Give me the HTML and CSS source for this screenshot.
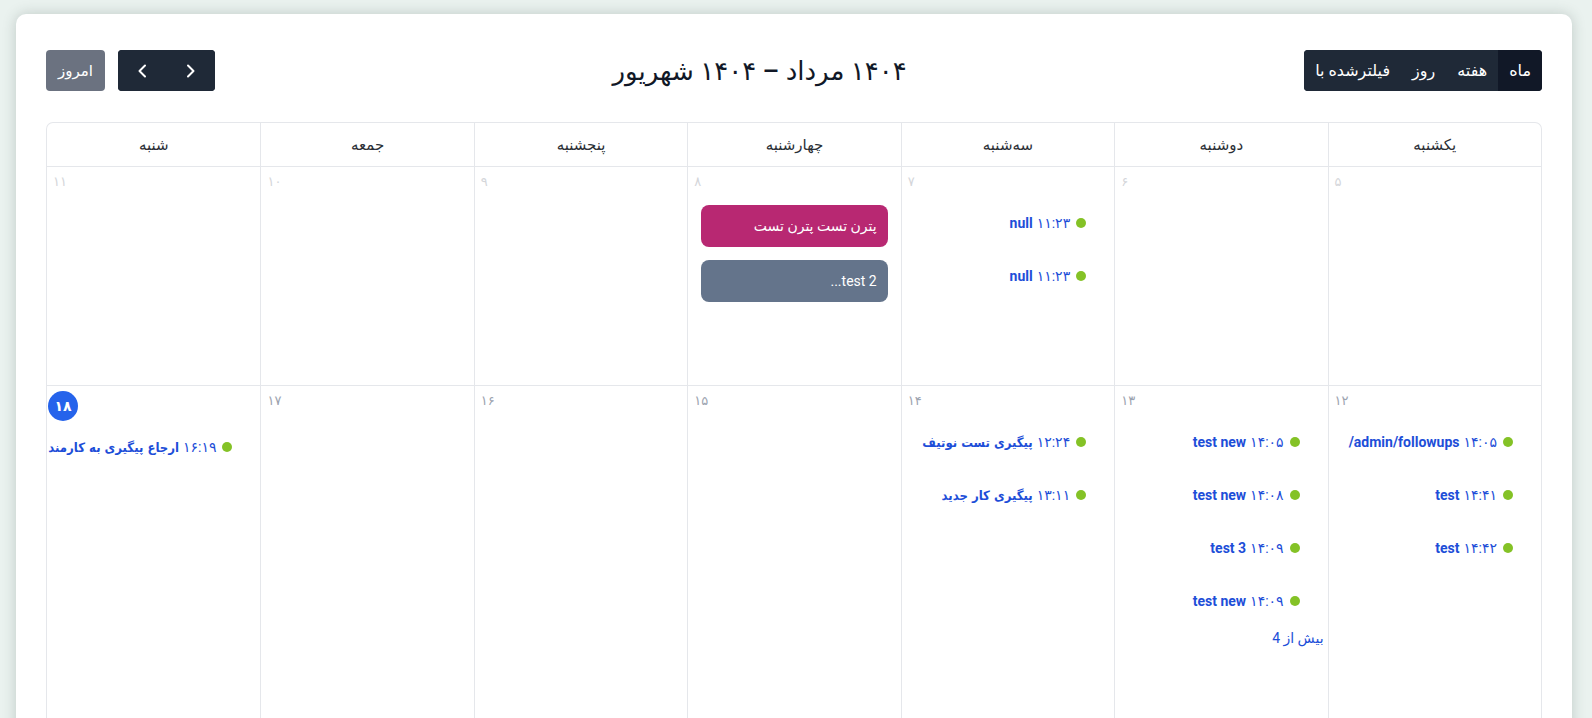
FILE: index.html
```html
<!DOCTYPE html>
<html lang="fa" dir="rtl">
<head>
<meta charset="utf-8">
<title>تقویم</title>
<link rel="stylesheet" href="styles.css">
</head>
<body>
<div class="page">
  <div class="card">
    <div class="toolbar">
      <div class="views">
        <button class="vbtn active">ماه</button>
        <button class="vbtn">هفته</button>
        <button class="vbtn">روز</button>
        <button class="vbtn">فیلترشده با</button>
      </div>
      <h2 class="title">۱۴۰۴ مرداد – ۱۴۰۴ شهریور</h2>
      <div class="nav">
        <div class="navgroup">
          <button class="nbtn" aria-label="قبلی"><svg width="10" height="14" viewBox="0 0 10 14"><polyline points="2,1.5 7.5,7 2,12.5" fill="none" stroke="#fff" stroke-width="2" stroke-linecap="round" stroke-linejoin="round"/></svg></button>
          <button class="nbtn" aria-label="بعدی"><svg width="10" height="14" viewBox="0 0 10 14"><polyline points="8,1.5 2.5,7 8,12.5" fill="none" stroke="#fff" stroke-width="2" stroke-linecap="round" stroke-linejoin="round"/></svg></button>
        </div>
        <button class="today">امروز</button>
      </div>
    </div>

    <div class="grid">
      <div class="hd">یکشنبه</div>
      <div class="hd">دوشنبه</div>
      <div class="hd">سه&zwnj;شنبه</div>
      <div class="hd">چهارشنبه</div>
      <div class="hd">پنجشنبه</div>
      <div class="hd">جمعه</div>
      <div class="hd">شنبه</div>

      <!-- row 1 -->
      <div class="cell r1"><div class="num-area"><span class="num faded">۵</span></div></div>
      <div class="cell r1"><div class="num-area"><span class="num faded">۶</span></div></div>
      <div class="cell r1"><div class="num-area"><span class="num faded">۷</span></div>
        <div class="ev"><span class="dot"></span><span class="time">۱۱:۲۳</span><span class="etitle">null</span></div>
        <div class="ev"><span class="dot"></span><span class="time">۱۱:۲۳</span><span class="etitle">null</span></div>
      </div>
      <div class="cell r1"><div class="num-area"><span class="num faded">۸</span></div>
        <div class="block magenta">پترن تست پترن تست</div>
        <div class="block slate">test 2...</div>
      </div>
      <div class="cell r1"><div class="num-area"><span class="num faded">۹</span></div></div>
      <div class="cell r1"><div class="num-area"><span class="num faded">۱۰</span></div></div>
      <div class="cell r1"><div class="num-area"><span class="num faded">۱۱</span></div></div>

      <!-- row 2 -->
      <div class="cell r2"><div class="num-area"><span class="num">۱۲</span></div>
        <div class="ev"><span class="dot"></span><span class="time">۱۴:۰۵</span><span class="etitle">admin/followups/</span></div>
        <div class="ev"><span class="dot"></span><span class="time">۱۴:۴۱</span><span class="etitle">test</span></div>
        <div class="ev"><span class="dot"></span><span class="time">۱۴:۴۲</span><span class="etitle">test</span></div>
      </div>
      <div class="cell r2"><div class="num-area"><span class="num">۱۳</span></div>
        <div class="ev"><span class="dot"></span><span class="time">۱۴:۰۵</span><span class="etitle">test new</span></div>
        <div class="ev"><span class="dot"></span><span class="time">۱۴:۰۸</span><span class="etitle">test new</span></div>
        <div class="ev"><span class="dot"></span><span class="time">۱۴:۰۹</span><span class="etitle">test 3</span></div>
        <div class="ev"><span class="dot"></span><span class="time">۱۴:۰۹</span><span class="etitle">test new</span></div>
        <a class="more">بیش از 4</a>
      </div>
      <div class="cell r2"><div class="num-area"><span class="num">۱۴</span></div>
        <div class="ev"><span class="dot"></span><span class="time">۱۲:۲۴</span><span class="etitle fa">پیگیری تست نوتیف</span></div>
        <div class="ev"><span class="dot"></span><span class="time">۱۳:۱۱</span><span class="etitle fa">پیگیری کار جدید</span></div>
      </div>
      <div class="cell r2"><div class="num-area"><span class="num">۱۵</span></div></div>
      <div class="cell r2"><div class="num-area"><span class="num">۱۶</span></div></div>
      <div class="cell r2"><div class="num-area"><span class="num">۱۷</span></div></div>
      <div class="cell r2"><div class="num-area"><span class="num today-num">۱۸</span></div>
        <div class="ev"><span class="dot"></span><span class="time">۱۶:۱۹</span><span class="etitle fa">ارجاع پیگیری به کارمند</span></div>
      </div>
    </div>
  </div>
</div>
</body>
</html>
```

FILE: styles.css
```css
* { box-sizing: border-box; }

html, body {
  margin: 0;
  padding: 0;
  height: 100%;
  overflow: hidden;
}

body {
  background: #eaf2ef;
  font-family: Roboto, "DejaVu Sans", sans-serif;
  color: #1f2937;
}

.page {
  padding: 14px 20px 0 16px;
}

.card {
  background: #fff;
  border-radius: 10px;
  box-shadow: 0 0 14px rgba(40, 60, 55, 0.22);
  padding: 36px 30px 0 30px;
  min-height: 800px;
}

.toolbar {
  display: flex;
  justify-content: space-between;
  align-items: center;
  height: 41px;
  margin-bottom: 31px;
}

button {
  font-family: inherit;
  border: 0;
  cursor: pointer;
}

.views {
  display: flex;
  height: 41px;
  border-radius: 4px;
  overflow: hidden;
  background: #1f2937;
}

.vbtn {
  background: #1f2937;
  color: #fff;
  font-size: 16px;
  font-weight: 500;
  padding: 0 11px;
  height: 41px;
}

.vbtn.active {
  background: #111827;
}

.title {
  margin: 0;
  font-size: 26px;
  font-weight: 500;
  color: #111827;
}

.nav {
  display: flex;
  gap: 13px;
  align-items: center;
}

.navgroup {
  display: flex;
  background: #1f2937;
  border-radius: 4px;
  overflow: hidden;
  height: 41px;
}

.nbtn {
  width: 48.5px;
  height: 41px;
  background: #1f2937;
  display: flex;
  align-items: center;
  justify-content: center;
  padding: 0;
}

.today {
  background: #6b7280;
  color: #fff;
  font-size: 15px;
  font-weight: 500;
  height: 41px;
  padding: 0 12px;
  border-radius: 4px;
}

.grid {
  display: grid;
  grid-template-columns: repeat(7, 1fr);
  grid-template-rows: 44px 219px 420px;
  border: 1px solid #e5e7eb;
  border-bottom: 0;
  border-radius: 7px 7px 0 0;
}

.hd,
.cell {
  border-bottom: 1px solid #e5e7eb;
}

.hd:not(:nth-child(7n)),
.cell:not(:nth-child(7n)) {
  border-left: 1px solid #e5e7eb;
}

.hd {
  display: flex;
  align-items: center;
  justify-content: center;
  font-size: 15px;
  color: #2b2f36;
}

.cell {
  display: flex;
  flex-direction: column;
  min-width: 0;
}

.num-area {
  display: flex;
  justify-content: flex-end;
  align-items: flex-start;
  min-height: 30px;
}

.num {
  margin-top: 1px;
  line-height: 28px;
  padding-left: 6px;
  font-size: 13px;
  color: #9ca3af;
}

.num.faded {
  color: #d4d6da;
}

.num.today-num {
  margin-top: 5px;
  margin-left: 1px;
  padding: 0;
  width: 30px;
  height: 30px;
  line-height: 30px;
  border-radius: 50%;
  background: #2563eb;
  color: #fff;
  font-weight: 700;
  font-size: 14px;
  text-align: center;
}

.ev {
  display: flex;
  align-items: center;
  height: 52.8px;
  padding-right: 28px;
  font-size: 14px;
  color: #1d4ed8;
  white-space: nowrap;
}

.dot {
  width: 10px;
  height: 10px;
  border-radius: 50%;
  background: #84c226;
  flex: none;
  margin-left: 6px;
}

.time {
  margin-left: 4px;
}

.etitle {
  font-weight: 700;
}

.etitle.fa {
  font-family: "DejaVu Sans Condensed", "DejaVu Sans", sans-serif;
  font-size: 13px;
}

.block {
  margin: 8px 13px 5px 13px;
  height: 42px;
  border-radius: 8px;
  color: #fff;
  font-size: 14px;
  display: flex;
  align-items: center;
  padding: 0 11px;
}

.block + .block {
  margin-top: 8px;
}

.block.magenta {
  background: #b82872;
}

.block.slate {
  background: #64748b;
}

.more {
  display: block;
  line-height: 22px;
  padding-right: 4px;
  font-size: 14px;
  color: #1d4ed8;
}
```
